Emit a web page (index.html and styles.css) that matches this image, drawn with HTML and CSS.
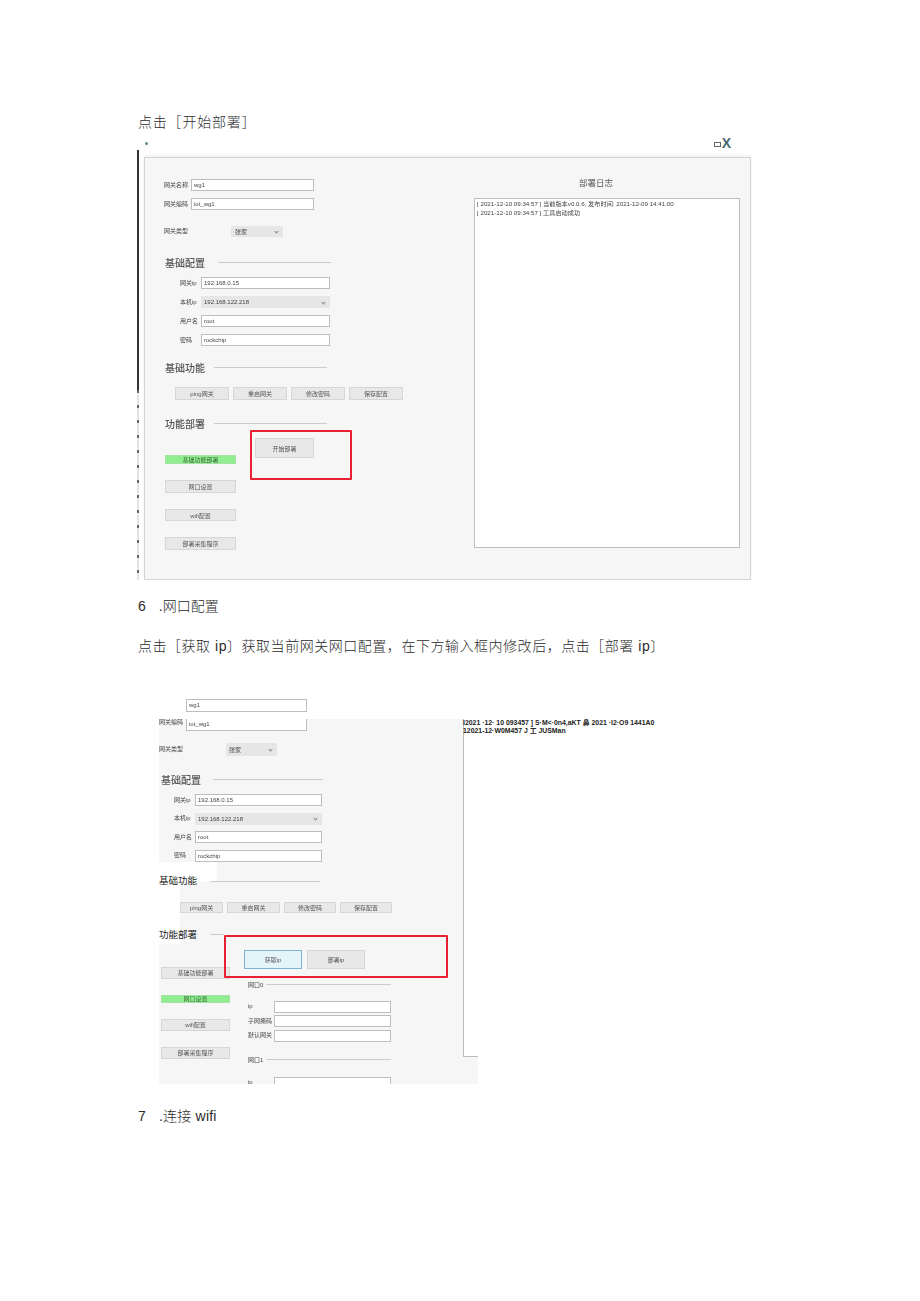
FILE: index.html
```html
<!DOCTYPE html>
<html lang="zh">
<head>
<meta charset="utf-8">
<title>开始部署</title>
<link rel="stylesheet" href="styles.css">
</head>
<body>

<p class="line first">点击［开始部署］</p>

<div class="shot1">
	<div class="edge"><div class="edge-solid"></div><div class="edge-dash"></div></div>
	<div class="shot1-main">
		<div class="titlebar"><span class="dot"></span><span class="winbtns"><span class="winbox"></span>X</span></div>
		<div class="panel">
			<div class="form">
				<div class="row"><span class="lb">网关名称</span><div class="field">wg1</div></div>
				<div class="row r2"><span class="lb">网关编码</span><div class="field">iot_wg1</div></div>
				<div class="row r3"><span class="lb wide">网关类型</span><div class="select type">张家<span class="chev"></span></div></div>

				<div class="head h-a"><span>基础配置</span><i></i></div>
				<div class="rows">
					<div class="row"><span class="lb short">网关ip</span><div class="field long">192.168.0.15</div></div>
					<div class="row"><span class="lb short">本机ip</span><div class="select long">192.168.122.218<span class="chev"></span></div></div>
					<div class="row"><span class="lb short">用户名</span><div class="field long">root</div></div>
					<div class="row"><span class="lb short">密码</span><div class="field long">rockchip</div></div>
				</div>

				<div class="head h-b"><span>基础功能</span><i></i></div>
				<div class="btnrow">
					<div class="btn">ping网关</div><div class="btn">重启网关</div><div class="btn">修改密码</div><div class="btn">保存配置</div>
				</div>

				<div class="head h-c"><span>功能部署</span><i></i></div>
				<div class="deploy">
					<div class="nav">
						<div class="btn green">基础功能部署</div>
						<div class="btn n2">网口设置</div>
						<div class="btn n3">wifi配置</div>
						<div class="btn n4">部署采集程序</div>
					</div>
					<div class="btn start">开始部署</div>
				</div>
				<div class="redbox red1"></div>
			</div>
			<div class="log">
				<div class="log-title">部署日志</div>
				<div class="log-box">
					<div>[ 2021-12-10 09:34:57 ] 当前版本v0.0.6, 发布时间: 2021-12-09 14:41:00</div>
					<div>[ 2021-12-10 09:34:57 ] 工具启动成功</div>
				</div>
			</div>
		</div>
	</div>
</div>

<p class="line sec6">6<span class="num-gap"></span>.网口配置</p>
<p class="line para">点击［获取 ip〕获取当前网关网口配置，在下方输入框内修改后，点击［部署 ip〕</p>

<div class="shot2">
	<div class="shot2-top"><div class="field s2-name">wg1</div></div>
	<div class="shot2-body">
		<div class="patch patch-a"></div>
		<div class="patch patch-b"></div>
		<div class="s2-form">
			<div class="row s2-cut"><span class="lb">网关编码</span><div class="field">iot_wg1</div></div>
			<div class="row s2-type"><span class="lb wide">网关类型</span><div class="select">张家<span class="chev"></span></div></div>

			<div class="head s2-h1"><span>基础配置</span><i></i></div>
			<div class="rows s2-rows">
				<div class="row"><span class="lb short">网关ip</span><div class="field">192.168.0.15</div></div>
				<div class="row"><span class="lb short">本机ip</span><div class="select">192.168.122.218<span class="chev"></span></div></div>
				<div class="row"><span class="lb short">用户名</span><div class="field">root</div></div>
				<div class="row"><span class="lb short">密码</span><div class="field">rockchip</div></div>
			</div>

			<div class="head s2-h2"><span></span><i></i></div>
			<div class="btnrow s2-btns">
				<div class="btn">ping网关</div><div class="btn">重启网关</div><div class="btn">修改密码</div><div class="btn">保存配置</div>
			</div>

			<div class="head s2-h3"><span></span><i></i></div>
			<div class="deploy s2-deploy">
				<div class="nav">
					<div class="btn">基础功能部署</div>
					<div class="btn green n2">网口设置</div>
					<div class="btn n3">wifi配置</div>
					<div class="btn n4">部署采集程序</div>
				</div>
				<div class="ports">
					<div class="port-btns"><div class="btn active">获取ip</div><div class="btn">部署ip</div></div>
					<div class="port-head"><span>网口0</span><i></i></div>
					<div class="port-rows">
						<div class="row"><span class="lb">ip</span><div class="field"></div></div>
						<div class="row"><span class="lb">子网掩码</span><div class="field"></div></div>
						<div class="row"><span class="lb">默认网关</span><div class="field"></div></div>
					</div>
					<div class="port-head p1"><span>网口1</span><i></i></div>
					<div class="port-rows p1-rows">
						<div class="row"><span class="lb">ip</span><div class="field"></div></div>
					</div>
				</div>
			</div>
		</div>
		<div class="s2-log"></div>
	</div>
	<!-- pasted over the picture -->
	<div class="over-log">
		<div>I2021 ·12· 10 093457 ] S·M&lt;·0n4,aKT 鼻 2021 ·I2·O9 1441A0</div>
		<div>12021-12·W0M457 J 工 JUSMan</div>
	</div>
	<div class="over-head oh1">基础功能</div>
	<div class="over-head oh2">功能部署</div>
	<div class="redbox red2"></div>
</div>

<p class="line sec7">7<span class="num-gap"></span>.连接 wifi</p>

</body>
</html>
```

FILE: styles.css
```css
* {box-sizing: border-box;}
body {margin: 0; padding: 0 0 0 137px; background: #fff; font-family: "Liberation Sans", "Noto Sans CJK SC", sans-serif;}
i {display: block; font-style: normal;}

/* Document text */
.line {margin: 0; height: 20px; line-height: 20px; font-size: 14px; color: #2b2b2b; font-weight: 300; white-space: nowrap; padding-left: 1px;}
.first {margin-top: 112px; letter-spacing: .8px;}
.sec6 {margin-top: 16px;}
.para {margin-top: 20px; letter-spacing: .53px;}
.sec7 {margin-top: 22px; letter-spacing: .2px;}
.num-gap {display: inline-block; width: 13px;}

/* First screenshot */
.shot1 {display: flex; margin-top: 1px; width: 614px; height: 447px;}
.edge {width: 2px; margin-top: 17px; margin-right: 5px;}
.edge-solid {height: 240px; background: #333;}
.edge-dash {height: 190px; background: repeating-linear-gradient(#666 0 3px, #e4e4e4 3px 15px);}
.shot1-main {width: 607px;}
.titlebar {height: 24px; display: flex; justify-content: space-between; align-items: center; padding: 0 20px 4px 0;}
.dot {width: 3px; height: 3px; border-radius: 50%; background: #5e8a7c; margin-left: 1px;}
.winbtns {display: flex; align-items: center; font-size: 14px; color: #4a6b70; font-weight: bold;}
.winbox {width: 7px; height: 5px; border: 1px solid #666; margin-right: 1px; margin-top: 2px;}

.panel {position: relative; display: flex; height: 423px; background: #f6f6f6; border: 1px solid #d4d4d4; filter: blur(.5px); font-size: 6px; color: #444; box-shadow: 0 -2px 3px #f2f2f2;}
.form {position: relative; width: 329px; padding: 21px 0 0 19px;}

.row {display: flex; align-items: center; height: 12px;}
.r2 {margin-top: 7px;}
.r3 {margin-top: 16px; height: 11px;}
.lb {width: 27px; flex: none; white-space: nowrap; padding-bottom: 2px;}
.lb.wide {width: 67px;}
.lb.short {width: 21px;}
.field {width: 123px; height: 100%; background: #fff; border: 1px solid #bdbdbd; padding-left: 2px; line-height: 10px; white-space: nowrap;}
.field.long, .select.long {width: 129px;}
.select {display: flex; justify-content: space-between; align-items: center; height: 100%; background: #e6e6e6; padding: 0 5px 0 3px; white-space: nowrap;}
.select.type {width: 52px; padding-left: 4px;}
.chev {width: 3px; height: 3px; border-right: 1px solid #888; border-bottom: 1px solid #888; transform: rotate(45deg);}

.head {display: flex; align-items: center; height: 14px; padding-left: 1px; font-size: 10px; font-weight: 500; color: #555;}
.head span {white-space: nowrap; width: 39px; flex: none;}
.head i {height: 1px; background: #ccc;}
.h-a {margin-top: 18px;}
.h-a i {margin-left: 14px; width: 113px;}
.h-b {margin-top: 14px;}
.h-b i, .h-c i {margin-left: 10px; width: 113px;}
.h-c {margin-top: 16px;}
.rows {display: flex; flex-direction: column; gap: 7px; margin-top: 8px; padding-left: 16px;}

.btn {display: flex; align-items: center; justify-content: center; height: 13px; background: #e8e8e8; border: 1px solid #d6d6d6; white-space: nowrap; color: #555;}
.btnrow {display: flex; gap: 4px; margin-top: 13px; padding-left: 11px;}
.btnrow .btn {width: 54px;}
.deploy {display: flex; padding-left: 1px;}
.nav {width: 71px; margin-top: 25px; display: flex; flex-direction: column;}
.nav .btn {width: 100%;}
.nav .green, .green {background: #90ee90; border-color: #a5e4a5; height: 9px; color: #3c6a3c;}
.n2 {margin-top: 16px;}
.n3 {margin-top: 16px; height: 12px;}
.n4 {margin-top: 16px;}
.start {width: 59px; height: 20px; margin: 8px 0 0 19px;}

.redbox {position: absolute; border: 2px solid #e8202f; border-radius: 1px;}
.red1 {left: 105px; top: 272px; width: 102px; height: 50px;}

.log {width: 266px; padding-top: 18px;}
.log-title {height: 14px; line-height: 14px; text-align: center; font-size: 8.5px; color: #555; padding-right: 22px;}
.log-box {height: 350px; margin-top: 8px; background: #fff; border: 1px solid #bdbdbd; padding: 0 2px; line-height: 9px; font-size: 6.2px;}

/* Second screenshot */
.shot2 {position: relative; margin: 43px 0 0 22px; width: 319px; height: 385px;}
.shot2-top {height: 20px; padding-left: 27px;}
.s2-name {width: 121px; height: 13px; font-size: 6px; color: #444; filter: blur(.5px);}
.shot2-body {position: relative; isolation: isolate; display: flex; height: 365px; overflow: hidden; background: #f6f6f6; font-size: 6px; color: #444; filter: blur(.5px);}
.patch {position: absolute; background: #fff; z-index: -1;}
.patch-a {left: 0; top: 143px; width: 58px; height: 20px;}
.patch-b {left: 0; top: 163px; width: 21px; height: 62px;}
.s2-form {width: 304px; flex: none;}
.s2-cut .field {width: 121px; border-top: 0;}
.s2-cut .lb {align-self: flex-start; line-height: 7px; padding: 0; margin-top: 0;}
.s2-type {margin-top: 12px; height: 13px;}
.s2-type .select {width: 51px;}
.s2-h1 {margin-top: 16px; padding-left: 2px;}
.s2-h1 i {margin-left: 13px; width: 110px;}
.s2-rows {gap: 6.5px; padding-left: 15px;}
.s2-rows .field, .s2-rows .select {width: 127px;}
.s2-h2 {margin-top: 13px; padding-left: 0;}
.s2-h2 i {margin-left: 12px; width: 110px;}
.s2-btns {gap: 4px; padding-left: 21px; margin-top: 13px;}
.s2-btns .btn {width: 52px; height: 11px;}
.s2-btns .btn:first-child {width: 43px;}
.s2-btns .btn:nth-child(2) {width: 53px;}
.s2-h3 {margin-top: 15px; padding-left: 2px;}
.s2-h3 i {margin-left: 10px; width: 14px;}
.s2-deploy {padding-left: 2px;}
.s2-deploy .nav {width: 69px;}
.s2-deploy .nav .btn {height: 12px;}
.s2-deploy .nav .green {height: 8px;}
.ports {margin-left: 14px; width: 147px;}
.port-btns {display: flex; gap: 5px; margin-top: 8px;}
.port-btns .btn {width: 58px; height: 19px;}
.port-btns .active {background: #e5f3fb; border-color: #7fb4d0;}
.port-head {display: flex; align-items: center; height: 10px; margin-top: 11px; padding-left: 4px;}
.port-head span {width: 18px; flex: none;}
.port-head i {width: 125px; height: 1px; background: #ccc;}
.port-rows {display: flex; flex-direction: column; gap: 2.5px; margin-top: 11px; padding-left: 4px;}
.port-rows .lb {width: 26px;}
.port-rows .field {width: 117px;}
.p1 {margin-top: 13px;}
.p1-rows {margin-top: 12px;}
.s2-log {width: 15px; height: 338px; background: #fff; border-left: 1px solid #bbb; border-bottom: 1px solid #bbb;}

.over-log {position: absolute; left: 304px; top: 20px; font-size: 6.9px; font-weight: bold; line-height: 8px; color: #222; white-space: nowrap;}
.over-head {position: absolute; left: 0; font-size: 9.5px; line-height: 12px; color: #222;}
.oh1 {top: 176px;}
.oh2 {top: 230px;}
.red2 {left: 65px; top: 236px; width: 224px; height: 43px;}
```
